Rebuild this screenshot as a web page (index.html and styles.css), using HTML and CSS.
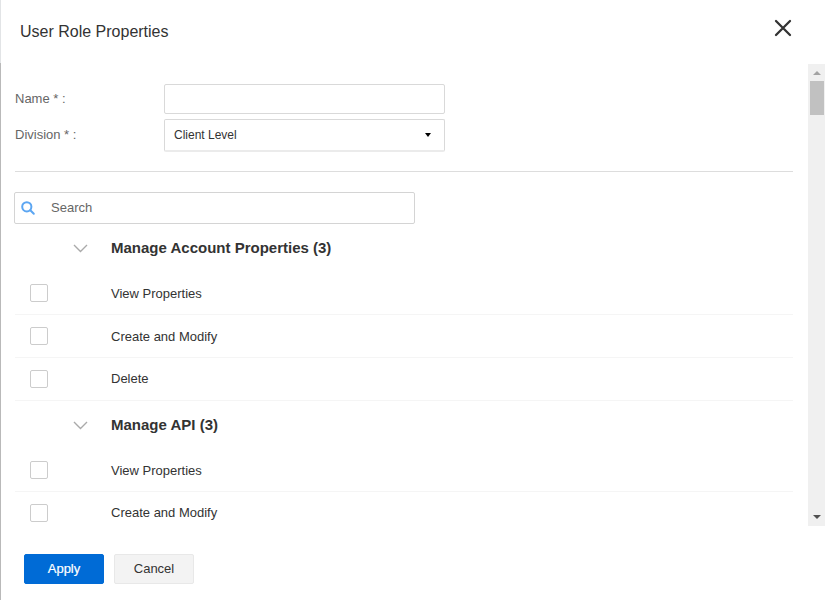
FILE: index.html
```
<!DOCTYPE html>
<html lang="en">
<head>
<meta charset="utf-8">
<title>User Role Properties</title>
<link rel="stylesheet" href="styles.css">
</head>
<body>
<div class="dialog">
  <header class="header">
    <h1 class="title">User Role Properties</h1>
    <svg class="close" width="18" height="18" viewBox="0 0 18 18"><path d="M2 2L16 16M16 2L2 16"/></svg>
  </header>
  <div class="middle">
    <main class="content">
      <div class="field name"><label for="name">Name * :</label><input id="name" class="box" type="text"></div>
      <div class="field division"><span>Division * :</span><div class="box select"><span>Client Level</span><svg width="6" height="4" viewBox="0 0 6 4"><path d="M0 0H6L3 4Z"/></svg></div></div>
      <div class="search">
        <svg width="15" height="15" viewBox="0 0 15 15"><circle cx="5.8" cy="5.8" r="4.6"/><path d="M9.3 9.3L12.8 12.8"/></svg>
        <span>Search</span>
      </div>
      <section>
        <div class="group"><svg width="15" height="9" viewBox="0 0 15 9"><path d="M1 1L7.5 7.5L14 1"/></svg><h2>Manage Account Properties (3)</h2></div>
        <div class="row"><i class="check"></i><span>View Properties</span></div>
        <div class="row"><i class="check"></i><span>Create and Modify</span></div>
        <div class="row third"><i class="check"></i><span>Delete</span></div>
      </section>
      <section>
        <div class="group"><svg width="15" height="9" viewBox="0 0 15 9"><path d="M1 1L7.5 7.5L14 1"/></svg><h2>Manage API (3)</h2></div>
        <div class="row"><i class="check"></i><span>View Properties</span></div>
        <div class="row third"><i class="check"></i><span>Create and Modify</span></div>
      </section>
    </main>
    <div class="scrollbar">
      <svg width="8" height="4" viewBox="0 0 8 4"><path fill="#a3a3a3" d="M0 4L4 0L8 4Z"/></svg>
      <div class="thumb"></div>
      <svg class="down" width="8" height="4" viewBox="0 0 8 4"><path fill="#505050" d="M0 0H8L4 4Z"/></svg>
    </div>
  </div>
  <footer class="footer">
    <button class="btn primary">Apply</button>
    <button class="btn">Cancel</button>
  </footer>
</div>
</body>
</html>
```
FILE: styles.css
```
* { box-sizing: border-box; }
body { margin: 0; background: #fff; color: #333; font: 13px/16px "Liberation Sans", Arial, sans-serif; overflow: hidden; }
.dialog { height: 600px; display: flex; flex-direction: column; border-left: 1px solid; border-image: linear-gradient(#e2e4e6 64px, #b9b9b9 64px) 1; }
.header { height: 64px; display: flex; justify-content: space-between; padding: 19px 33px 0 19px; }
.title { margin: 4px 0 0; font-size: 16px; line-height: 18px; font-weight: 400; }
.close { fill: none; stroke: #333; stroke-width: 2.3; stroke-linecap: round; }
.middle { height: 462px; display: flex; justify-content: space-between; }
.content { width: 792px; padding: 20px 0 0 13px; overflow: hidden; }
.field { display: flex; color: #666; margin-left: 1px; }
.field > :first-child { width: 149px; }
.name { height: 35px; }
.name label { padding-top: 7px; }
.division { height: 53px; border-bottom: 1px solid #ddd; }
.division > span { padding-top: 8px; }
.box { width: 281px; height: 30px; border: 1px solid #d9d9d9; border-radius: 2px; background: #fff; padding: 0 9px; outline: 0; }
.select { height: 33px; display: flex; align-items: center; justify-content: space-between; padding: 0 13px 1px 9px; border-bottom: 2px solid #ebebeb; font-size: 12px; color: #333; }
.search { width: 401px; height: 32px; margin-top: 20px; border: 1px solid #d4d4d4; border-radius: 2px; display: flex; align-items: center; color: #666; padding: 0 6px; }
.search svg { fill: none; stroke: #5ca6f2; stroke-width: 2; stroke-linecap: round; }
.search span { margin-left: 15px; }
.group { height: 48px; display: flex; align-items: center; padding-left: 59px; }
.group svg { fill: none; stroke: #aaa; stroke-width: 1.4; }
.group h2 { font-size: 15px; line-height: 18px; margin: 0 0 0 23px; }
.row { height: 43px; margin-left: 1px; border-bottom: 1px solid #f5f5f5; display: flex; align-items: center; padding-left: 15px; }
.check { width: 18px; height: 18px; border: 1px solid #ccc; border-radius: 2px; }
.row span { margin: 2px 0 0 63px; }
.row.third span { margin-top: 0; }
.scrollbar { width: 17px; background: #f0f0f0; display: flex; flex-direction: column; align-items: center; padding: 7px 0 7px 1px; }
.scrollbar svg { display: block; flex: none; }
.thumb { width: 14px; height: 34px; margin-top: 6px; background: #c1c1c1; }
.down { margin-top: auto; }
.footer { display: flex; gap: 10px; padding: 28px 0 0 23px; }
.btn { width: 80px; height: 30px; padding: 0; border: 1px solid #e8e8e8; border-radius: 2px; background: #f3f3f3; color: #333; font: inherit; }
.primary { background: #006bd6; border-color: #006bd6; color: #fff; -webkit-text-stroke: .2px #fff; }
```
